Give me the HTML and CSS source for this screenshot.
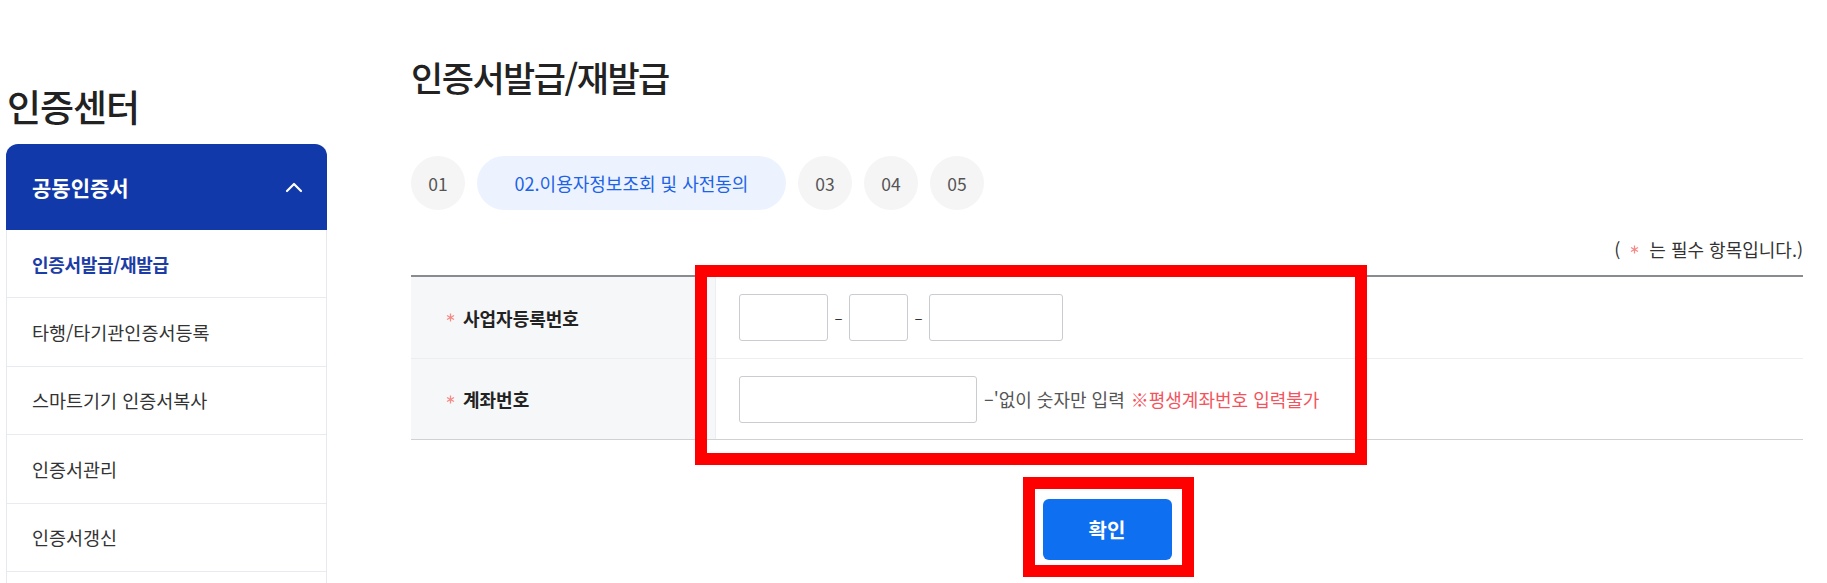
FILE: index.html
```html
<!DOCTYPE html>
<html lang="ko">
<head>
<meta charset="utf-8">
<title>인증서발급/재발급</title>
<link rel="stylesheet" href="styles.css">
</head>
<body>
<div class="page">
  <aside class="sidebar">
    <h2 class="side-title">인증센터</h2>
    <div class="side-box">
      <div class="side-head">
        <span>공동인증서</span>
        <svg class="chev" width="18" height="12" viewBox="0 0 18 12"><polyline points="2,10 9,3 16,10" fill="none" stroke="#fff" stroke-width="2.2" stroke-linecap="round" stroke-linejoin="round"/></svg>
      </div>
      <ul class="side-list">
        <li class="active">인증서발급/재발급</li>
        <li>타행/타기관인증서등록</li>
        <li>스마트기기 인증서복사</li>
        <li>인증서관리</li>
        <li>인증서갱신</li>
        <li class="more"></li>
      </ul>
    </div>
  </aside>
  <main class="main">
    <h1 class="title">인증서발급/재발급</h1>
    <ol class="steps">
      <li class="step">01</li>
      <li class="step current">02.이용자정보조회 및 사전동의</li>
      <li class="step">03</li>
      <li class="step">04</li>
      <li class="step">05</li>
    </ol>
    <p class="req-note">(<svg class="ast" width="9" height="9" viewBox="0 0 10 10"><path d="M5 0.5V9.5M1.1 2.75L8.9 7.25M1.1 7.25L8.9 2.75" stroke="#f58a86" stroke-width="1.4" fill="none"/></svg>는 필수 항목입니다.)</p>
    <div class="form-table">
      <div class="row">
        <div class="label"><svg class="ast" width="9" height="9" viewBox="0 0 10 10"><path d="M5 0.5V9.5M1.1 2.75L8.9 7.25M1.1 7.25L8.9 2.75" stroke="#f58a86" stroke-width="1.4" fill="none"/></svg>사업자등록번호</div>
        <div class="cell">
          <input class="inp w89" type="text"><span class="dash">–</span><input class="inp w59" type="text"><span class="dash">–</span><input class="inp w134" type="text">
        </div>
      </div>
      <div class="row">
        <div class="label"><svg class="ast" width="9" height="9" viewBox="0 0 10 10"><path d="M5 0.5V9.5M1.1 2.75L8.9 7.25M1.1 7.25L8.9 2.75" stroke="#f58a86" stroke-width="1.4" fill="none"/></svg>계좌번호</div>
        <div class="cell">
          <input class="inp w237" type="text"><span class="hint">–'없이 숫자만 입력 <em class="warn">※평생계좌번호 입력불가</em></span>
        </div>
      </div>
    </div>
    <div class="actions">
      <button class="btn" type="button">확인</button>
    </div>
  </main>
  <div class="mark mark-form"></div>
  <div class="mark mark-btn"></div>
</div>
</body>
</html>
```

FILE: styles.css
```css
* { box-sizing: border-box; }
html, body { margin: 0; padding: 0; background: #fff; }
body {
  font-family: "Noto Sans CJK KR", "Noto Sans", sans-serif;
  color: #333;
  overflow: hidden;
}
.page {
  position: relative;
  display: flex;
  align-items: flex-start;
  padding-left: 6px;
  height: 583px;
  overflow: hidden;
}
.sidebar {
  width: 321px;
  flex: none;
  padding-top: 74px;
}
.side-title {
  margin: 0 0 6px 1px;
  font-size: 37px;
  font-weight: 500;
  line-height: 64px;
  color: #222;
  letter-spacing: -1px;
}
.side-box {
  border: 1px solid #e6e9ee;
  border-top: none;
  border-radius: 12px 12px 0 0;
}
.side-head {
  background: #1239a9;
  height: 86px;
  margin: 0 -1px;
  border-radius: 12px 12px 0 0;
  display: flex;
  align-items: center;
  justify-content: space-between;
  padding: 0 24px 0 26px;
  color: #fff;
  font-size: 21px;
  font-weight: 700;
}
.chev { display: block; }
.side-list {
  list-style: none;
  margin: 0;
  padding: 0;
}
.side-list li {
  height: 68.4px;
  border-bottom: 1px solid #e8ebef;
  display: flex;
  align-items: center;
  padding-left: 25px;
  font-size: 18.5px;
  color: #333;
}
.side-list li.active {
  color: #1d3da6;
  font-weight: 700;
  font-size: 18px;
  letter-spacing: -0.3px;
}
.side-list li.more { border-bottom: none; }
.main {
  width: 1392px;
  margin-left: 84px;
  flex: none;
  padding-top: 46px;
}
.title {
  margin: 0;
  font-size: 35px;
  font-weight: 500;
  line-height: 62px;
  color: #222;
  letter-spacing: -1.5px;
}
.steps {
  list-style: none;
  margin: 48px 0 0;
  padding: 0;
  display: flex;
  gap: 12px;
}
.step {
  width: 54px;
  height: 54px;
  border-radius: 27px;
  background: #f5f5f6;
  color: #555;
  font-size: 17.5px;
  display: flex;
  align-items: center;
  justify-content: center;
}
.step.current {
  width: 309px;
  background: #edf3fe;
  color: #1c63e8;
  font-size: 18px;
}
.req-note {
  margin: 26px 0 0;
  display: flex;
  justify-content: flex-end;
  align-items: center;
  font-size: 18px;
  line-height: 26px;
  color: #333;
}
.req-note .ast { margin: 0 10px 0 10px; }
.ast { display: block; flex: none; }
.form-table {
  margin-top: 13px;
  border-top: 2px solid #888b90;
  border-bottom: 1px solid #cfd1d4;
}
.row {
  display: flex;
  height: 81px;
}
.row + .row { border-top: 1px solid #eceef0; }
.label {
  width: 305px;
  flex: none;
  background: #f6f7f8;
  border-right: 1px solid #eceef0;
  display: flex;
  align-items: center;
  padding-left: 35px;
  font-size: 18px;
  font-weight: 700;
  color: #222;
}
.label .ast { margin-right: 8px; }
.cell {
  flex: 1;
  display: flex;
  align-items: center;
  padding-left: 23px;
}
.inp {
  height: 47px;
  border: 1px solid #c9ccd0;
  border-radius: 3px;
  background: #fff;
  margin: 0;
  padding: 0 8px;
}
.w89 { width: 89px; }
.w59 { width: 59px; }
.w134 { width: 134px; }
.w237 { width: 238px; }
.dash {
  width: 21px;
  text-align: center;
  font-size: 15px;
  color: #333;
}
.hint {
  margin-left: 7px;
  font-size: 18px;
  color: #555;
}
.warn {
  font-style: normal;
  color: #f4535d;
  margin-left: 1px;
}
.actions {
  display: flex;
  justify-content: center;
  margin-top: 59px;
}
.btn {
  width: 129px;
  height: 61px;
  border: none;
  border-radius: 6px;
  background: #0e70f1;
  color: #fff;
  font-family: inherit;
  font-size: 20px;
  font-weight: 700;
}
.mark {
  position: absolute;
  border: 12px solid #ff0000;
}
.mark-form { left: 695px; top: 265px; width: 672px; height: 200px; }
.mark-btn { left: 1023px; top: 477px; width: 171px; height: 100px; }
```
